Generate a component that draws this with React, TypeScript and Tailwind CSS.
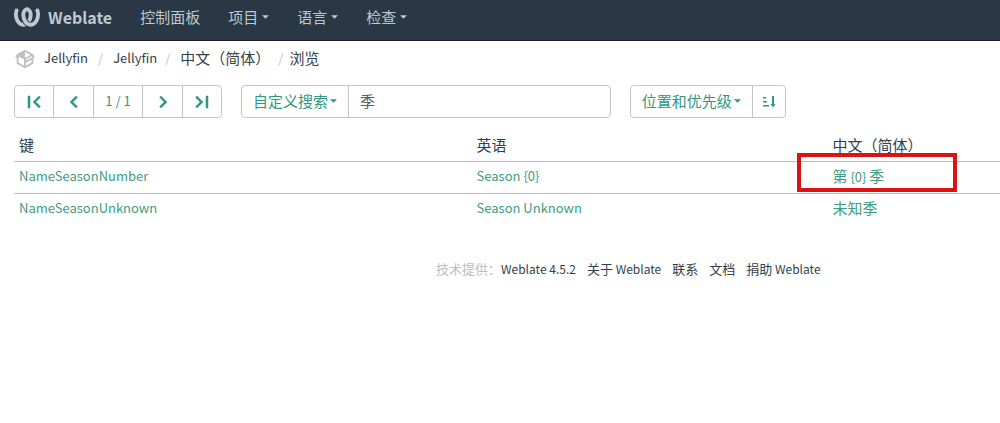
import React, { useState } from 'react';
import { SiWeblate } from 'react-icons/si';

const icons = {
  first: 'M18.41 16.59L13.82 12l4.59-4.59L17 6l-6 6 6 6zM6 6h2v12H6z',
  prev: 'M15.41 16.59L10.83 12l4.58-4.59L14 6l-6 6 6 6z',
  next: 'M8.59 16.59L13.17 12 8.59 7.41 10 6l6 6-6 6z',
  last: 'M5.59 7.41L10.18 12l-4.59 4.59L7 18l6-6-6-6zM16 6h2v12h-2z',
};

const PageIcon: React.FC<{ name: keyof typeof icons }> = ({ name }) => (
  <svg viewBox="0 0 24 24" className="w-6 h-6" fill="currentColor" stroke="currentColor" strokeWidth="0.5" aria-hidden="true">
    <path d={icons[name]} />
  </svg>
);

const Caret: React.FC = () => (
  <svg viewBox="0 0 8 4" className="w-[7px] h-1 shrink-0" fill="currentColor" aria-hidden="true">
    <path d="M0 0h8L4 4z" />
  </svg>
);

const PackageIcon: React.FC = () => (
  <svg viewBox="0 0 24 24" className="w-[22px] h-[22px] text-[#bfbfbf]" fill="currentColor" aria-hidden="true">
    <path d="M2 10.96C1.5 10.68 1.35 10.07 1.63 9.59L3.13 7C3.24 6.8 3.41 6.66 3.6 6.58L11.43 2.18C11.59 2.06 11.79 2 12 2C12.21 2 12.41 2.06 12.57 2.18L20.47 6.62C20.66 6.72 20.82 6.88 20.91 7.08L22.36 9.6C22.64 10.08 22.47 10.69 22 10.96L21 11.54V16.5C21 16.88 20.79 17.21 20.47 17.38L12.57 21.82C12.41 21.94 12.21 22 12 22C11.79 22 11.59 21.94 11.43 21.82L3.53 17.38C3.21 17.21 3 16.88 3 16.5V10.96C2.7 11.13 2.32 11.14 2 10.96M12 4.15V10.85L17.96 7.5L12 4.15M5 15.91L11 19.29V12.58L5 9.21V15.91M19 15.91V12.69L14 15.59C13.67 15.77 13.3 15.76 13 15.6V19.29L19 15.91M13.85 13.36L20.13 9.73L19.55 8.72L13.27 12.35L13.85 13.36Z" />
  </svg>
);

const SortIcon: React.FC = () => (
  <svg viewBox="0 0 14 14" className="w-3.5 h-3.5" fill="currentColor" aria-hidden="true">
    <path d="M1 2h3v1.6H1zM1 6h4v1.6H1zM1 10h6v1.6H1zM10 1h2v8h1.5L11 12.5 8.5 9H10z" />
  </svg>
);

const menus = ['项目', '语言', '检查'];

const groupButton = 'h-full flex items-center justify-center border-r border-[#c4c6c8] last:border-r-0';
const cell = 'px-[5px] pb-0.5';

const Navbar: React.FC = () => (
  <nav className="h-[41px] flex items-center bg-[#2a3744] border-b border-[#18222d] pl-3.5 pb-1.5 text-[#bfc8d0]">
    <a href="#" className="flex items-center gap-2 mr-7">
      <SiWeblate size={26} />
      <span className="font-bold text-base">Weblate</span>
    </a>
    <div className="flex items-center gap-7">
      <a href="#">控制面板</a>
      {menus.map((name) => (
        <button key={name} type="button" className="flex items-center gap-1">
          {name}
          <Caret />
        </button>
      ))}
    </div>
  </nav>
);

const Breadcrumb: React.FC = () => (
  <nav aria-label="breadcrumb" className="flex items-center h-9 pl-3.5">
    <PackageIcon />
    <ol className="flex items-center ml-2 pb-0.5 text-[#333f4a]">
      <li className="text-[13px]"><a href="#">Jellyfin</a></li>
      <li className="px-2.5 text-[#c4c6c8] text-[13px]">/</li>
      <li className="text-[13px]"><a href="#">Jellyfin</a></li>
      <li className="pl-2 pr-2.5 text-[#c4c6c8] text-[13px]">/</li>
      <li><a href="#">中文（简体）</a></li>
      <li className="pl-2 pr-1.5 text-[#c4c6c8] text-[13px]">/</li>
      <li>浏览</li>
    </ol>
  </nav>
);

const Toolbar: React.FC = () => {
  const [query, setQuery] = useState('季');

  return (
    <div className="flex items-center h-[33px] mt-2 pl-3.5 text-[#2f9880]">
      <div className="flex h-full border border-[#c4c6c8] rounded">
        <button type="button" aria-label="第一页" className={`${groupButton} w-[39px]`}><PageIcon name="first" /></button>
        <button type="button" aria-label="上一页" className={`${groupButton} w-10`}><PageIcon name="prev" /></button>
        <button type="button" className={`${groupButton} w-[49px] pb-0.5 text-[13px]`}>1 / 1</button>
        <button type="button" aria-label="下一页" className={`${groupButton} w-10`}><PageIcon name="next" /></button>
        <button type="button" aria-label="最后一页" className={`${groupButton} w-[38px]`}><PageIcon name="last" /></button>
      </div>

      <div className="flex h-full ml-[19px] w-[37.5%] border border-[#c4c6c8] rounded">
        <button type="button" className={`${groupButton} shrink-0 gap-0.5 px-[11px] pb-0.5`}>
          自定义搜索
          <Caret />
        </button>
        <input
          type="text"
          aria-label="搜索"
          value={query}
          onChange={(e) => setQuery(e.target.value)}
          className="flex-1 min-w-0 px-[11px] pb-0.5 text-[#555d65] outline-none"
        />
      </div>

      <div className="flex h-full ml-[19px] border border-[#c4c6c8] rounded">
        <button type="button" className={`${groupButton} gap-0.5 px-[11px] pb-0.5`}>
          位置和优先级
          <Caret />
        </button>
        <button type="button" aria-label="排序" className={`${groupButton} w-8`}><SortIcon /></button>
      </div>
    </div>
  );
};

export default function App() {
  return (
    <div className="min-h-screen bg-white font-['Noto_Sans_CJK_SC',sans-serif] text-[15px] leading-5 text-[#333f4a]">
      <Navbar />
      <Breadcrumb />
      <Toolbar />

      <div className="pl-3.5 mt-[11px]">
        <table className="w-full table-fixed text-left">
          <thead>
            <tr className="h-8">
              <th className="w-[46.4%] px-[5px] font-normal">键</th>
              <th className="w-[36.1%] px-[5px] font-normal">英语</th>
              <th className="px-[5px] font-normal">中文（简体）</th>
            </tr>
          </thead>
          <tbody className="text-[#3f9c80]">
            <tr className="h-8 border-t border-[#b9bcbf]">
              <td className={`${cell} text-[13px]`}><a href="#">NameSeasonNumber</a></td>
              <td className={`${cell} text-[13px]`}><a href="#">Season {'{0}'}</a></td>
              <td className={`${cell} relative`}>
                <a href="#">第<span className="text-[13px]"> {'{0}'} </span>季</a>
                <span className="absolute -left-[30px] -top-[9px] w-40 h-[39px] border-4 border-[#dd1212] pointer-events-none" />
              </td>
            </tr>
            <tr className="h-8 border-t border-[#b9bcbf]">
              <td className={`${cell} text-[13px]`}><a href="#">NameSeasonUnknown</a></td>
              <td className={`${cell} text-[13px]`}><a href="#">Season Unknown</a></td>
              <td className={cell}><a href="#">未知季</a></td>
            </tr>
          </tbody>
        </table>
      </div>

      <footer className="flex items-center mt-[34px] pl-[43.6%] text-[13px] leading-5">
        <span className="text-[#bbbdbf]">技术提供：</span>
        <ul className="flex gap-[11px]">
          <li><a href="#" className="text-xs leading-5">Weblate 4.5.2</a></li>
          <li><a href="#">关于<span className="text-xs leading-5"> Weblate</span></a></li>
          <li><a href="#">联系</a></li>
          <li><a href="#">文档</a></li>
          <li><a href="#">捐助<span className="text-xs leading-5"> Weblate</span></a></li>
        </ul>
      </footer>
    </div>
  );
}
